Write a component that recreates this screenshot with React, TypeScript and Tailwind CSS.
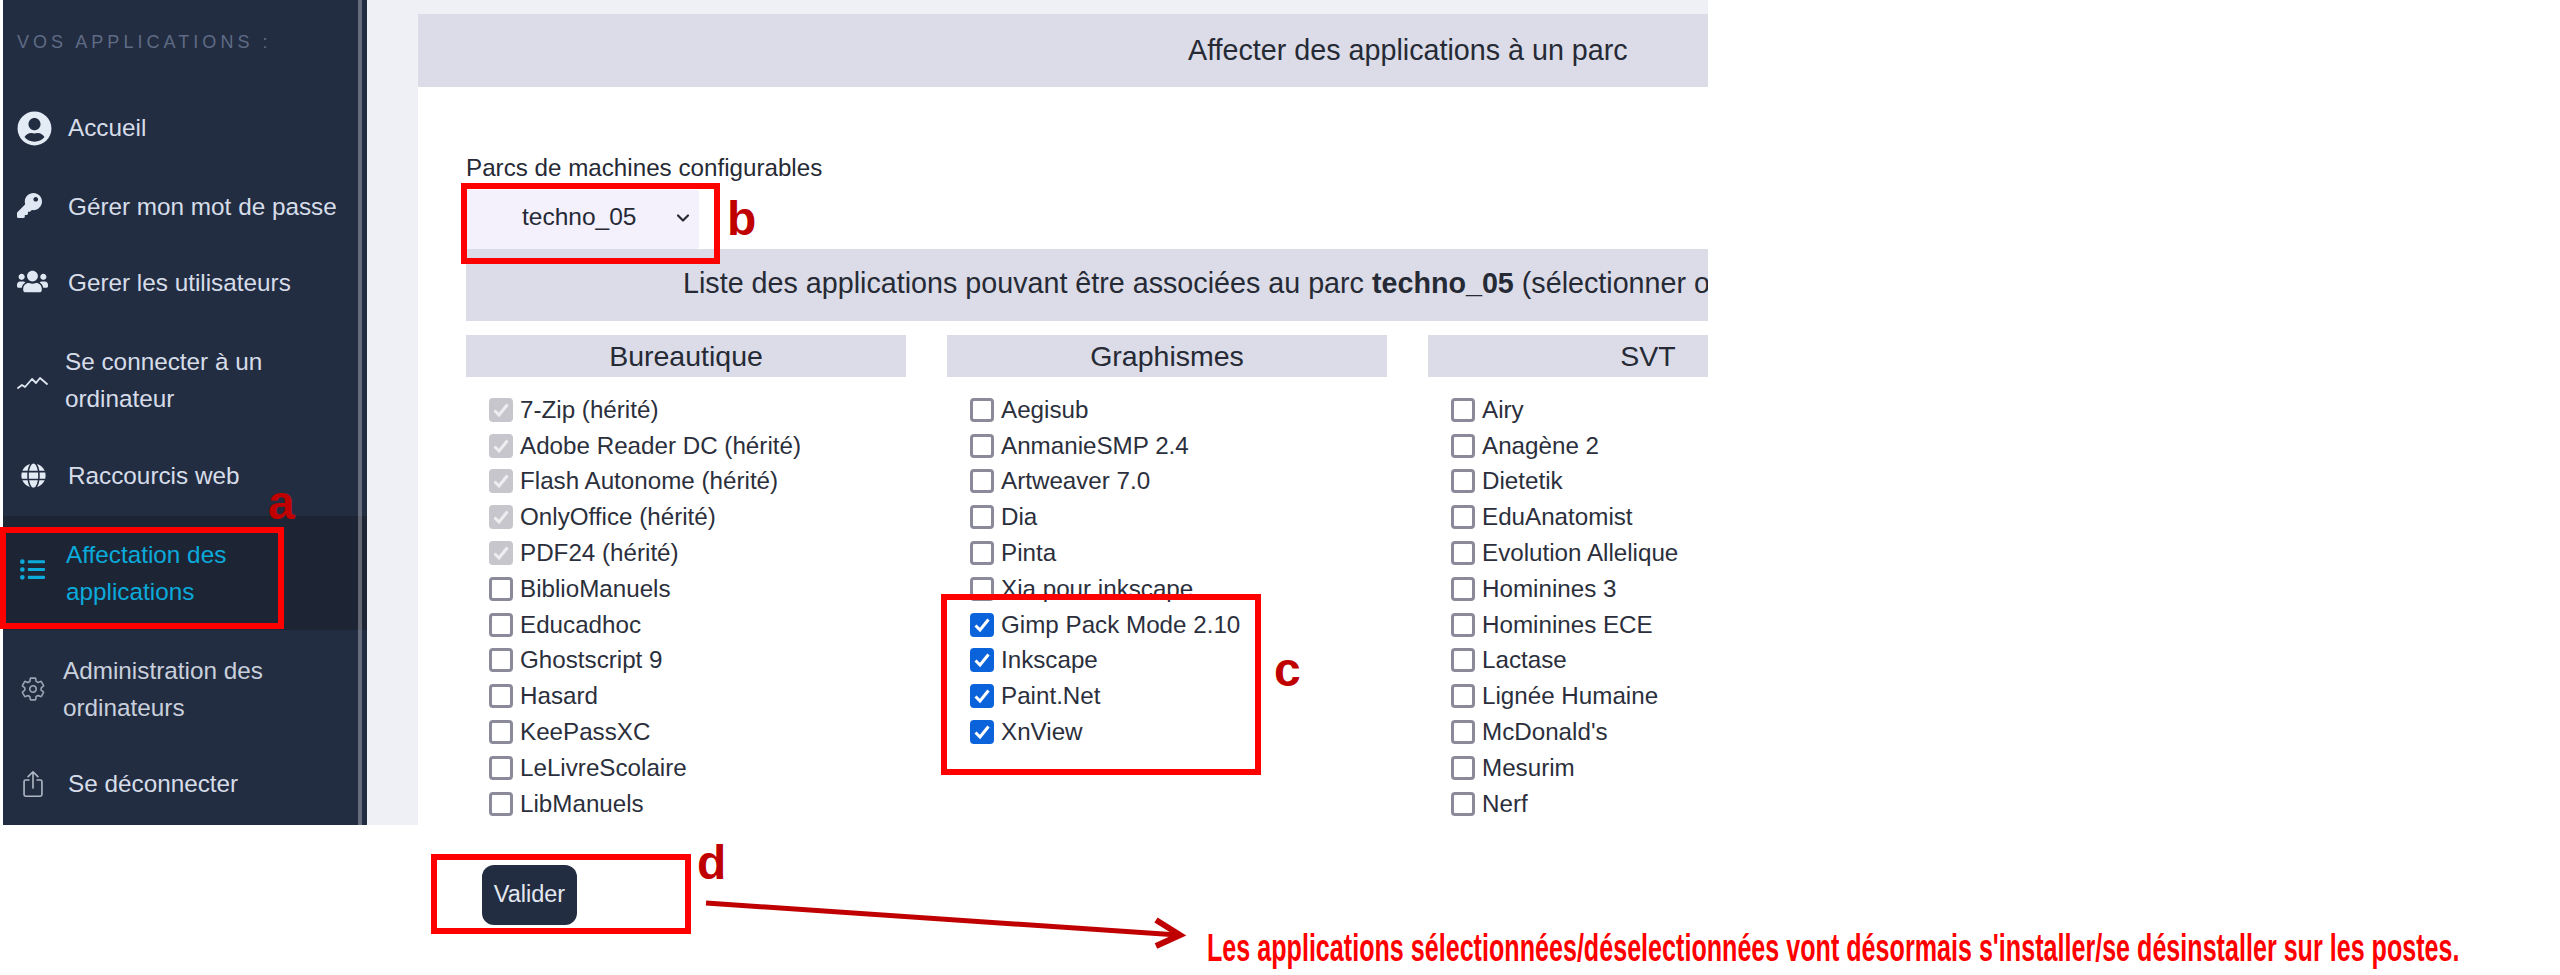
import React from "react";
import { FaKey, FaUsers, FaGlobe, FaListUl, FaUserCircle } from "react-icons/fa";
import { BsBoxArrowUp } from "react-icons/bs";
import { IoSettingsOutline } from "react-icons/io5";
import { LuChevronDown } from "react-icons/lu";

const Wave = () => (
  <svg width="31" height="16" viewBox="0 0 31 16" fill="none" stroke="#dfe7f2" strokeWidth="1.8" strokeLinejoin="round" strokeLinecap="round">
    <path d="M1 13 L5 10 L8 12 L15 4 L19 8 L23 3 L30 9" />
  </svg>
);

function NavRow({ rowCls, slotCls, textCls, icon, children }: { rowCls: string; slotCls: string; textCls: string; icon: React.ReactNode; children: React.ReactNode }) {
  return (
    <div className={"flex items-center pl-[14px] " + rowCls}>
      <div className={"shrink-0 flex items-center " + slotCls}>{icon}</div>
      <div className={"text-[24.3px] leading-[37.5px] " + textCls}>{children}</div>
    </div>
  );
}

function App_Check({ label, state }: { label: string; state?: "on" | "inherited" }) {
  const boxCls =
    state === "on"
      ? "bg-[#0b63dc] border-[#0b63dc]"
      : state === "inherited"
        ? "bg-[#c6c6cc] border-[#c6c6cc]"
        : "bg-white border-[#8a8a9a]";
  return (
    <label className="flex items-center h-[35.8px] text-[24.2px] text-[#2b2f3c] whitespace-nowrap">
      <span className={"relative w-[24px] h-[24px] shrink-0 rounded-[4px] border-[3px] flex items-center justify-center " + boxCls}>
        <input type="checkbox" readOnly checked={state !== undefined} disabled={state === "inherited"} className="absolute inset-0 m-0 opacity-0" />
        {state && (
          <svg width="18" height="18" viewBox="0 0 18 18" fill="none" stroke={state === "on" ? "#ffffff" : "#eeeef0"} strokeWidth="3">
            <path d="M2.5 9.5 L7 14 L15.5 3.5" />
          </svg>
        )}
      </span>
      <span className="ml-[7px]">{label}</span>
    </label>
  );
}

function Column({ title, cls, items }: { title: string; cls: string; items: { l: string; s?: "on" | "inherited" }[] }) {
  return (
    <div className={"shrink-0 " + cls}>
      <div className="h-[42px] bg-[#dbdce8] flex items-center justify-center text-[28.5px] text-[#262a35]">{title}</div>
      <div className="mt-[15px] pl-[23px]">
        {items.map((i) => (
          <App_Check key={i.l} label={i.l} state={i.s} />
        ))}
      </div>
    </div>
  );
}

const inh = "inherited" as const;
const on = "on" as const;
const col1 = [
  { l: "7-Zip (hérité)", s: inh },
  { l: "Adobe Reader DC (hérité)", s: inh },
  { l: "Flash Autonome (hérité)", s: inh },
  { l: "OnlyOffice (hérité)", s: inh },
  { l: "PDF24 (hérité)", s: inh },
  { l: "BiblioManuels" },
  { l: "Educadhoc" },
  { l: "Ghostscript 9" },
  { l: "Hasard" },
  { l: "KeePassXC" },
  { l: "LeLivreScolaire" },
  { l: "LibManuels" },
];
const col2 = [
  { l: "Aegisub" },
  { l: "AnmanieSMP 2.4" },
  { l: "Artweaver 7.0" },
  { l: "Dia" },
  { l: "Pinta" },
  { l: "Xia pour inkscape" },
  { l: "Gimp Pack Mode 2.10", s: on },
  { l: "Inkscape", s: on },
  { l: "Paint.Net", s: on },
  { l: "XnView", s: on },
];
const col3 = [
  "Airy", "Anagène 2", "Dietetik", "EduAnatomist", "Evolution Allelique", "Hominines 3",
  "Hominines ECE", "Lactase", "Lignée Humaine", "McDonald's", "Mesurim", "Nerf",
].map((l) => ({ l }));

export default function App() {
  return (
    <div className="relative w-[2560px] h-[975px] bg-white overflow-hidden font-['Liberation_Sans',Arial,sans-serif]">
      <div className="flex h-[825px] pl-[3px]">
        {/* Sidebar */}
        <aside className="relative w-[364px] shrink-0 bg-[#232d42] text-[#d6dde9]">
          <div className="h-[90px] pl-[14px] pt-[32px] text-[18px] leading-[20px] tracking-[4.05px] text-[#5f6b85]">VOS APPLICATIONS :</div>
          <NavRow rowCls="h-[76px]" slotCls="w-[51px]" textCls="" icon={<FaUserCircle size={35} color="#e3ebf5" />}>Accueil</NavRow>
          <NavRow rowCls="h-[82px]" slotCls="w-[51px] -mt-[4px]" textCls="" icon={<FaKey size={25} color="#dfe7f2" />}>Gérer mon mot de passe</NavRow>
          <NavRow rowCls="h-[70px]" slotCls="w-[51px] -mt-[4px]" textCls="" icon={<FaUsers size={31} color="#dfe7f2" />}>Gerer les utilisateurs</NavRow>
          <NavRow rowCls="h-[124px]" slotCls="w-[48px] mt-[6px]" textCls="" icon={<Wave />}>Se connecter à un<br />ordinateur</NavRow>
          <NavRow rowCls="h-[74px] pb-[6px]" slotCls="w-[51px] -mt-[2px] pl-[4px]" textCls="" icon={<FaGlobe size={25} color="#e3ebf5" />}>Raccourcis web</NavRow>
          <NavRow rowCls="h-[114px] bg-[#1d2535]" slotCls="w-[49px] -mt-[8px] pl-[3px]" textCls="text-[#0aaadb]" icon={<FaListUl size={25} color="#0aaadb" />}>Affectation des<br />applications</NavRow>
          <NavRow rowCls="h-[118px] text-[#c9d0dc]" slotCls="w-[46px] pl-[3px]" textCls="" icon={<IoSettingsOutline size={26} color="#9aa3b4" />}>Administration des<br />ordinateurs</NavRow>
          <NavRow rowCls="h-[77px] pb-[6px]" slotCls="w-[51px] pl-[3px]" textCls="" icon={<BsBoxArrowUp size={26} color="#aeb6c4" />}>Se déconnecter</NavRow>
          <div className="absolute top-0 bottom-0 left-[355px] w-[4px] bg-white/30" />
        </aside>

        {/* Main */}
        <main className="w-[1341px] shrink-0 overflow-hidden bg-[#eff0f5] pl-[51px] pt-[14px]">
          <div className="h-full bg-white overflow-hidden">
            <div className="h-[73px] bg-[#dbdce8] pl-[770px] flex items-center text-[28.7px] text-[#262a35] whitespace-nowrap">Affecter des applications à un parc</div>
            <div className="pl-[48px]">
              <div className="mt-[68px] mb-[9px] text-[24.2px] leading-[26px] text-[#262a35]">Parcs de machines configurables</div>
              <div className="w-[233px] h-[59px] bg-[#f4f1fd] rounded-[2px] flex items-center pl-[56px] pb-[4px] text-[24.5px] text-[#262a35]">
                <span>techno_05</span>
                <LuChevronDown size={20} strokeWidth={2.6} className="ml-[37px]" />
              </div>
              <div className="h-[72px] bg-[#dbdce8] pl-[217px] pb-[2px] flex items-center text-[28.7px] text-[#262a35] whitespace-nowrap overflow-hidden">
                <span>Liste des applications pouvant être associées au parc <b>techno_05</b> (sélectionner ou désélectionner)</span>
              </div>
              <div className="mt-[14px] flex gap-[41px]">
                <Column title="Bureautique" cls="w-[440px]" items={col1} />
                <Column title="Graphismes" cls="w-[440px]" items={col2} />
                <Column title="SVT" cls="w-[440px]" items={col3} />
              </div>
            </div>
          </div>
        </main>
      </div>

      <button className="ml-[482px] mt-[40px] w-[95px] h-[60px] rounded-[12px] bg-[#232d42] text-[#e3e8f0] text-[23.5px]">Valider</button>

      {/* Annotations */}
      <div className="absolute left-0 top-[527px] w-[284px] h-[102px] border-[6px] border-[#ff0000]" />
      <div className="absolute left-[461px] top-[183px] w-[259px] h-[81px] border-[6px] border-[#ff0000]" />
      <div className="absolute left-[941px] top-[594px] w-[320px] h-[181px] border-[6px] border-[#ff0000]" />
      <div className="absolute left-[431px] top-[854px] w-[260px] h-[80px] border-[6px] border-[#ff0000]" />

      <div className="absolute left-[268px] top-[475px] text-[48px] leading-[56px] font-bold text-[#c00000]">a</div>
      <div className="absolute left-[727px] top-[191px] text-[48px] leading-[56px] font-bold text-[#c00000]">b</div>
      <div className="absolute left-[1274px] top-[642px] text-[48px] leading-[56px] font-bold text-[#c00000]">c</div>
      <div className="absolute left-[697px] top-[835px] text-[48px] leading-[56px] font-bold text-[#c00000]">d</div>

      <svg className="absolute left-[700px] top-[890px]" width="490" height="65" viewBox="0 0 490 65" fill="none" stroke="#c00000" strokeWidth="5">
        <path d="M6 13 L478 45" />
        <path d="M456 30 L480 45 L456 56" strokeWidth="6" />
      </svg>

      <div className="absolute left-[1207px] top-[926px] origin-left scale-x-[0.644] text-[39px] leading-[44px] font-bold text-[#ff0000] whitespace-nowrap">
        Les applications sélectionnées/déselectionnées vont désormais s'installer/se désinstaller sur les postes.
      </div>
    </div>
  );
}
